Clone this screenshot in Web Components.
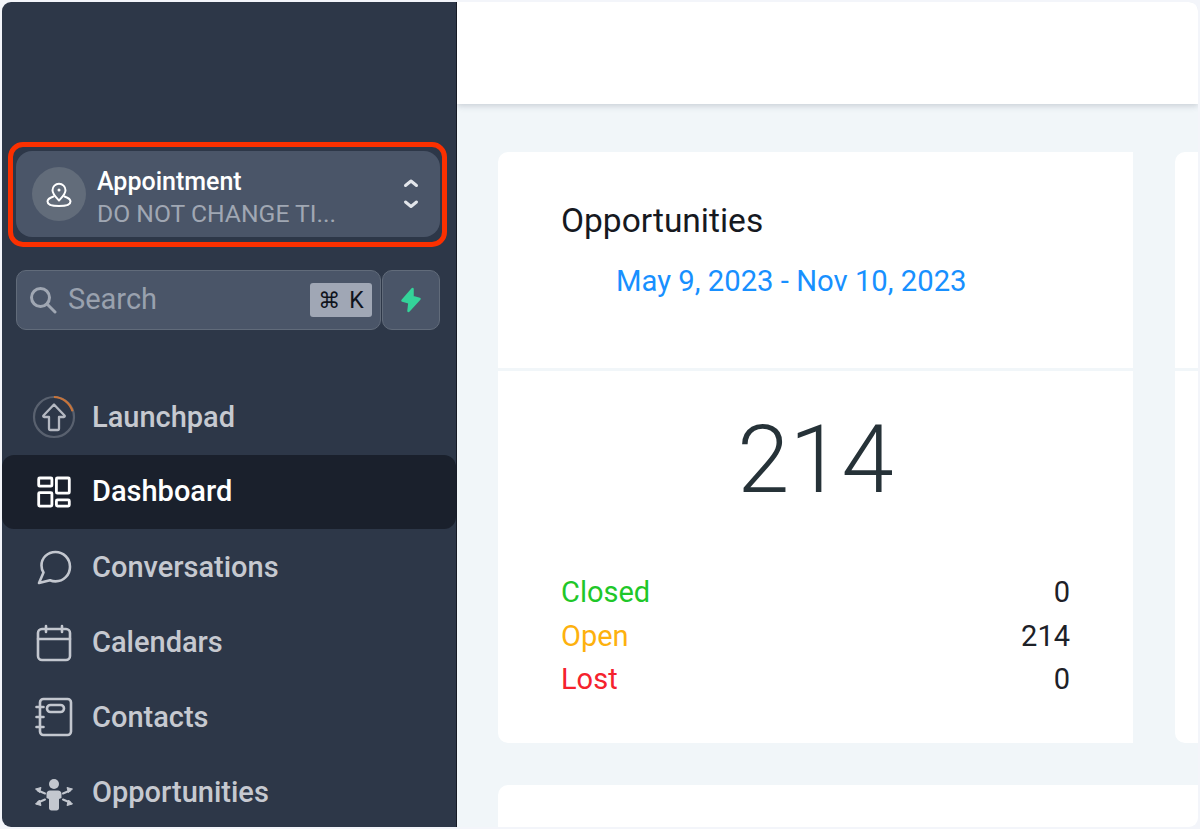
<!DOCTYPE html>
<html lang="en">
  <head>
    <meta charset="UTF-8" />
    <title>Dashboard</title>
    <style>
      html, body { margin: 0; height: 100%; }
      body { background: #f3f5fa; font-family: Roboto, "Liberation Sans", sans-serif; overflow: hidden; }
      svg { display: block; }
    </style>
  </head>
  <body>
    <app-shell>
      <side-bar slot="side">
        <location-switcher name="Appointment" sub="DO NOT CHANGE TI..."></location-switcher>
        <search-box></search-box>
        <nav-item label="Launchpad">
          <svg width="44" height="44" viewBox="0 0 44 44" fill="none">
            <circle cx="22" cy="22" r="20" stroke="#59616f" stroke-width="2.2"/>
            <path d="M22 2a20 20 0 0 1 18.500 14.300" stroke="#c8743a" stroke-width="2.2"/>
            <path d="M22 9.500 11.500 20.500c-.6.7-.2 1.500.7 1.500H17v11.500c0 .8.6 1.500 1.400 1.500h7.200c.8 0 1.400-.7 1.400-1.500V22h4.800c.9 0 1.300-.8.7-1.500Z" stroke="#b4b8c1" stroke-width="2.300" stroke-linejoin="round"/>
          </svg>
        </nav-item>
        <nav-item label="Dashboard" active>
          <svg width="44" height="44" viewBox="0 0 44 44" fill="none" stroke="#fff" stroke-width="2.8" stroke-linejoin="round">
            <rect x="6.700" y="9" width="13.200" height="8.200" rx="1"/>
            <rect x="24.400" y="9" width="12.900" height="15.200" rx="1"/>
            <rect x="6.700" y="23.600" width="13.200" height="13.500" rx="1"/>
            <rect x="24.400" y="30.900" width="12.900" height="6.200" rx="1"/>
          </svg>
        </nav-item>
        <nav-item label="Conversations">
          <svg width="44" height="44" viewBox="0 0 44 44" fill="none" stroke="#c3c7cf" stroke-width="2.6" stroke-linejoin="round">
            <path d="M23.500 7C15.500 7 9.500 13 9.500 20.500c0 2.600.7 5 2 7L7 38l11-2.800c1.700.8 3.600 1.200 5.500 1.200C31.500 36.400 38 30 38 21.700 38 13.500 31.500 7 23.500 7Z"/>
          </svg>
        </nav-item>
        <nav-item label="Calendars">
          <svg width="44" height="44" viewBox="0 0 44 44" fill="none" stroke="#c3c7cf" stroke-width="2.6" stroke-linecap="round" stroke-linejoin="round">
            <rect x="6" y="9" width="32" height="31" rx="4"/>
            <path d="M6 19h32M14 6v6M30 6v6"/>
          </svg>
        </nav-item>
        <nav-item label="Contacts">
          <svg width="44" height="44" viewBox="0 0 44 44" fill="none" stroke="#c3c7cf" stroke-width="2.6" stroke-linecap="round" stroke-linejoin="round">
            <rect x="8" y="4" width="31" height="36" rx="3.500"/>
            <rect x="15" y="10" width="17" height="7" rx="3.500"/>
            <path d="M4.500 12h7M4.500 22h7M4.500 32h7"/>
          </svg>
        </nav-item>
        <nav-item label="Opportunities">
          <svg width="44" height="44" viewBox="0 0 44 44">
            <circle cx="22" cy="14" r="5" fill="#c3c7cf"/>
            <path d="M18 20.500h8c2 0 3.500 1.500 3.500 3.500v4L27 29v9c0 1.500-1 2.500-2.500 2.500h-5C18 40.500 17 39.500 17 38v-9l-2.500-1v-4c0-2 1.500-3.500 3.500-3.500Z" fill="#c3c7cf"/>
            <path d="M13 23.500 6 20.500M31 23.500 38 20.500M13 29.500 6 32.500M31 29.500 38 32.500" stroke="#c3c7cf" stroke-width="2" stroke-linecap="round"/>
            <path d="M3.500 19 9 17.500 7.500 22.500ZM40.500 19 35 17.500 36.500 22.500ZM3.500 34 7.500 30 9 35.500ZM40.500 34 36.500 30 35 35.500Z" fill="#c3c7cf" stroke="#c3c7cf" stroke-width="1" stroke-linejoin="round"/>
          </svg>
        </nav-item>
      </side-bar>
      <top-bar slot="top"></top-bar>
      <dash-board slot="main">
        <stat-card heading="Opportunities" range="May 9, 2023 - Nov 10, 2023" total="214">
          <stat-row label="Closed" value="0" color="#1fc72a"></stat-row>
          <stat-row label="Open" value="214" color="#fdb10e"></stat-row>
          <stat-row label="Lost" value="0" color="#f5222d"></stat-row>
        </stat-card>
        <stat-card></stat-card>
        <blank-card></blank-card>
      </dash-board>
    </app-shell>

    <template id="shell-template">
      <style>
        :host { display: block; box-sizing: border-box; height: 100vh; padding: 2px; }
        .frame { display: flex; height: 100%; border-radius: 9px; overflow: hidden; background: #f1f6f9; }
        .col { flex: 1; min-width: 0; display: flex; flex-direction: column; overflow: hidden; }
      </style>
      <div class="frame">
        <slot name="side"></slot>
        <div class="col">
          <slot name="top"></slot>
          <slot name="main"></slot>
        </div>
      </div>
    </template>

    <template id="sidebar-template">
      <style>
        :host { display: block; box-sizing: border-box; width: 455px; flex: none; height: 100%; background: #2d3748; border-right: 1px solid #161b26; padding-top: 140px; overflow: hidden; }
      </style>
      <slot></slot>
    </template>

    <template id="switcher-template">
      <style>
        :host { display: block; box-sizing: border-box; width: 439px; margin-left: 6px; border: 5px solid #fb3000; border-radius: 15px; padding: 4px 2px 5px 3px; }
        .box { display: flex; align-items: center; height: 86px; box-sizing: border-box; padding: 0 16px; background: #4a5568; border-radius: 16px; }
        .avatar { width: 54px; height: 54px; flex: none; border-radius: 50%; background: #626c7a; display: flex; align-items: center; justify-content: center; }
        .text { flex: 1; min-width: 0; margin-left: 11px; padding-top: 8px; }
        .name { color: #fff; font-size: 25px; font-weight: 500; line-height: 32px; }
        .sub { color: #a0a7b3; font-size: 24.700px; line-height: 32px; }
      </style>
      <div class="box">
        <div class="avatar">
          <svg width="30" height="30" viewBox="0 0 30 30" fill="none" stroke="#fff" stroke-width="2" stroke-linejoin="round" stroke-linecap="round">
            <path d="M15 21.500c-3-3.200-6.500-6.500-6.500-10.300a6.500 6.500 0 0 1 13 0c0 3.800-3.500 7.100-6.500 10.300Z"/>
            <circle cx="15" cy="11" r="1.500" fill="#fff" stroke="none"/>
            <path d="M9.500 17.500C6.500 18.500 3.500 20 3.500 22.500c0 3 5 4.500 11.500 4.500s11.500-1.500 11.500-4.500c0-2.500-3-4-6-5"/>
          </svg>
        </div>
        <div class="text">
          <div class="name"></div>
          <div class="sub"></div>
        </div>
        <svg width="20" height="36" viewBox="0 0 20 36" fill="none" stroke="#e2e5ea" stroke-width="3" stroke-linecap="round" stroke-linejoin="round" style="flex:none;margin-right:3px">
          <path d="M4.500 9.500 10 5l5.500 4.500M4.500 26l5.500 4.500L15.500 26"/>
        </svg>
      </div>
    </template>

    <template id="search-template">
      <style>
        :host { display: flex; box-sizing: border-box; margin: 23px 0 50px 14px; width: 424px; height: 60px; gap: 1px; }
        .field, .bolt { box-sizing: border-box; height: 60px; background: #4a5568; border: 1px solid #616b7a; border-radius: 10px; display: flex; align-items: center; }
        .field { flex: 1; padding: 0 8px 0 12px; }
        .bolt { width: 58px; flex: none; justify-content: center; }
        .hint { color: #99a1ae; font-size: 29px; flex: 1; margin-left: 11px; padding-bottom: 2px; }
        .key { background: #a0a7b5; color: #10141c; font-size: 22px; height: 34px; width: 62px; border-radius: 3px; display: flex; align-items: center; justify-content: center; gap: 9px; font-family: "DejaVu Sans", Roboto, sans-serif; }
        .key span { font-family: Roboto, sans-serif; font-size: 23px; }
      </style>
      <div class="field">
        <svg width="28" height="28" viewBox="0 0 28 28" fill="none" stroke="#a0a7b3" stroke-width="3" stroke-linecap="round">
          <circle cx="11.500" cy="11.500" r="9"/>
          <path d="M18 18l8 8"/>
        </svg>
        <div class="hint">Search</div>
        <div class="key">⌘<span>K</span></div>
      </div>
      <div class="bolt">
        <svg width="24" height="28" viewBox="0 0 24 28"><path d="M13.500 3 3.500 14.500 10.500 16.500 9.500 25 20.500 13 13.500 11Z" fill="#34d399" stroke="#34d399" stroke-width="2.500" stroke-linejoin="round"/></svg>
      </div>
    </template>

    <template id="nav-template">
      <style>
        :host { display: flex; align-items: center; box-sizing: border-box; height: 75.200px; padding: 0 0 2px 30px; color: #c6c9d0; font-size: 29px; font-weight: 500; border-radius: 12px; }
        :host([active]) { background: #1a202c; color: #fff; height: 74px; margin-bottom: 1px; }
        .icon { width: 44px; height: 44px; flex: none; margin-right: 16px; }
      </style>
      <div class="icon"><slot></slot></div>
      <div class="label"></div>
    </template>

    <template id="topbar-template">
      <style>
        :host { display: block; flex: none; height: 102px; background: #fff; box-shadow: 0 2px 6px rgba(60, 70, 90, .22); position: relative; }
      </style>
    </template>

    <template id="dash-template">
      <style>
        :host { display: grid; flex: 1; min-height: 0; grid-template-columns: 635px 100px; grid-template-rows: 591px 100px; gap: 42px; padding: 48px 0 0 41px; }
      </style>
      <slot></slot>
    </template>

    <template id="card-template">
      <style>
        :host { display: flex; flex-direction: column; background: #fff; border-radius: 10px 0 0 10px; color: #1d2127; }
        .head { box-sizing: border-box; height: 219px; padding: 49px 0 0 63px; border-bottom: 3px solid #f1f6f9; }
        h2 { margin: 0; font-size: 33.500px; font-weight: 400; line-height: 40px; color: #16191f; }
        .range { margin: 21px 0 0 55px; font-size: 29.250px; line-height: 38px; color: #1890ff; }
        .total { text-align: center; font-size: 94px; font-weight: 300; line-height: 100px; margin-top: 39px; color: #263238; }
        .rows { padding: 61px 63px 0; }
      </style>
      <div class="head">
        <h2></h2>
        <div class="range"></div>
      </div>
      <div class="total"></div>
      <div class="rows"><slot></slot></div>
    </template>

    <template id="row-template">
      <style>
        :host { display: flex; justify-content: space-between; font-size: 29px; line-height: 43.500px; }
      </style>
      <div class="label"></div>
      <div class="value"></div>
    </template>

    <template id="blank-template">
      <style>
        :host { display: block; grid-column: 1 / -1; width: 800px; height: 100px; background: #fff; border-radius: 10px 0 0 0; }
      </style>
    </template>

    <script type="module">
      const define = (name, templateId, fill) => {
        customElements.define(name, class extends HTMLElement {
          constructor() {
            super();
            this.attachShadow({ mode: "open" });
          }

          connectedCallback() {
            const content = document.getElementById(templateId).content.cloneNode(true);
            if (fill) fill(content, this);
            this.shadowRoot.appendChild(content);
          }
        });
      };

      const text = (content, selector, value) => {
        content.querySelector(selector).textContent = value || "";
      };

      define("app-shell", "shell-template");
      define("side-bar", "sidebar-template");
      define("top-bar", "topbar-template");
      define("dash-board", "dash-template");
      define("blank-card", "blank-template");
      define("search-box", "search-template");

      define("location-switcher", "switcher-template", (content, el) => {
        text(content, ".name", el.getAttribute("name"));
        text(content, ".sub", el.getAttribute("sub"));
      });

      define("nav-item", "nav-template", (content, el) => {
        text(content, ".label", el.getAttribute("label"));
      });

      define("stat-card", "card-template", (content, el) => {
        text(content, "h2", el.getAttribute("heading"));
        text(content, ".range", el.getAttribute("range"));
        text(content, ".total", el.getAttribute("total"));
      });

      define("stat-row", "row-template", (content, el) => {
        text(content, ".label", el.getAttribute("label"));
        text(content, ".value", el.getAttribute("value"));
        content.querySelector(".label").style.color = el.getAttribute("color");
      });
    </script>
  </body>
</html>
